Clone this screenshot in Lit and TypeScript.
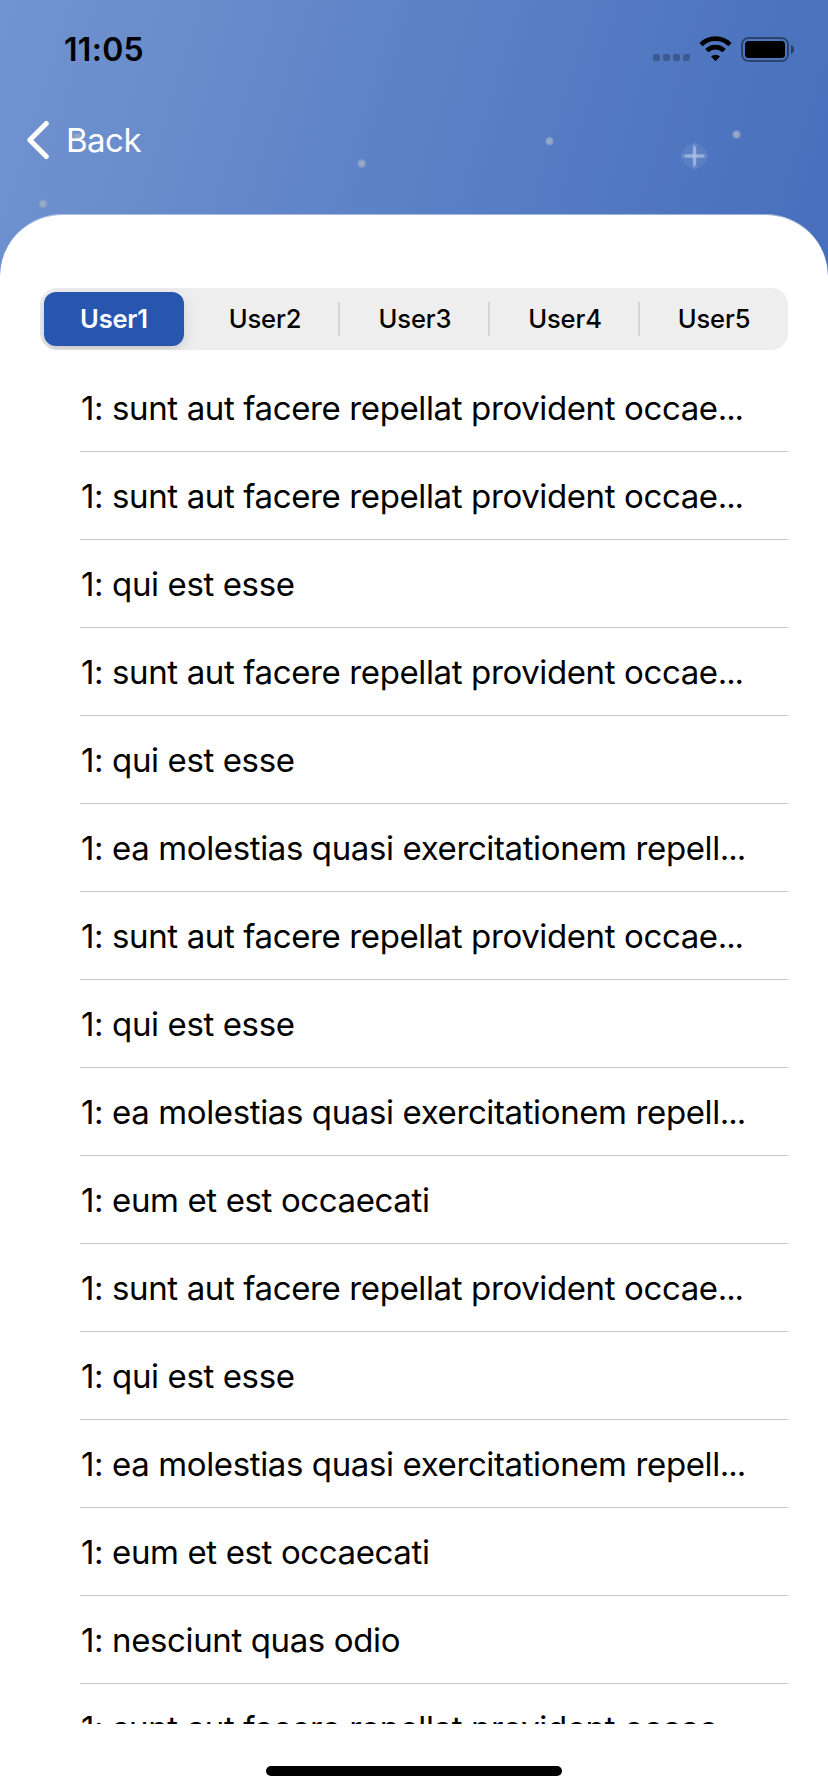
import { LitElement, html, css, svg } from "lit";
import { customElement, property, state } from "lit/decorators.js";
import { classMap } from "lit/directives/class-map.js";

const SUNT = { text: "1: sunt aut facere repellat provident occae", cut: true };
const QUI = { text: "1: qui est esse", cut: false };
const EA = { text: "1: ea molestias quasi exercitationem repell", cut: true };
const EUM = { text: "1: eum et est occaecati", cut: false };
const NESCIUNT = { text: "1: nesciunt quas odio", cut: false };

const POSTS = [SUNT, SUNT, QUI, SUNT, QUI, EA, SUNT, QUI, EA, EUM, SUNT, QUI, EA, EUM, NESCIUNT, SUNT];

const STARS = [
  [361.7, 163.5],
  [43, 203.7],
  [77.5, 137],
  [549.5, 141.2],
  [736.5, 134.5],
];

@customElement("status-bar")
export class StatusBar extends LitElement {
  static styles = css`
    :host { display: flex; justify-content: space-between; height: 94px; padding: 0 34px 0 64px; box-sizing: border-box; }
    .time { font-size: 32px; font-weight: 600; line-height: 40px; margin-top: 30px; letter-spacing: 0.3px; color: #000; }
    .icons { display: flex; align-items: flex-start; margin-top: 36px; }
  `;
  render() {
    return html`
      <span class="time">11:05</span>
      <span class="icons">
        <svg width="142" height="28" viewBox="652 36 142 28">
          <g fill="#000" fill-opacity=".25">
            ${[653, 663, 673, 683].map((x) => svg`<rect x=${x} y="54" width="7" height="7" rx="2" />`)}
          </g>
          <g fill="none" stroke="#000">
            <path d="M701 44.6 A20.5 20.5 0 0 1 730 44.6" stroke-width="4.7" />
            <path d="M706.8 50.7 A12.3 12.3 0 0 1 724.2 50.7" stroke-width="4.6" />
          </g>
          <path d="M711 56.5 A6.6 6.6 0 0 1 720 56.5 L715.5 61.2 Z" fill="#000" />
          <rect x="742" y="38" width="46" height="23" rx="6.5" fill="none" stroke="#000" stroke-opacity=".42" stroke-width="2" />
          <rect x="745" y="41" width="40" height="17" rx="3.5" fill="#000" />
          <path d="M791 45 C795 46.5 795 52.5 791 54 Z" fill="#000" fill-opacity=".45" />
        </svg>
      </span>
    `;
  }
}

@customElement("segmented-control")
export class SegmentedControl extends LitElement {
  @property({ type: Array }) items: string[] = [];
  @property({ type: Number }) selected = 0;

  static styles = css`
    :host { display: block; }
    .track { display: grid; grid-template-columns: 150px 150px 150px 150px 148px; height: 62px; border-radius: 17px; background: #eeeeee; overflow: hidden; }
    .seg { display: flex; align-items: center; justify-content: center; box-sizing: border-box; padding: 0; border: 0; background: none; font: 500 25.5px/30px Inter, sans-serif; letter-spacing: -0.1px; color: #000; }
    .seg.divided { background: linear-gradient(#d5d5d5, #d5d5d5) right 14px / 2px 34px no-repeat; }
    .seg.on { margin: 4px 6px 4px 4px; border-radius: 12px; background: #2856ae; color: #fff; font-weight: 600; letter-spacing: -0.2px; box-shadow: 0 6px 16px rgba(0, 0, 0, .12), 0 2px 3px rgba(0, 0, 0, .05); }
  `;
  render() {
    return html`<div class="track">
      ${this.items.map((label, i) => html`<button
        class=${classMap({ seg: true, on: i === this.selected, divided: i !== this.selected && i + 1 !== this.selected && i < this.items.length - 1 })}
        @click=${() => this.dispatchEvent(new CustomEvent("pick", { detail: i }))}
      >${label}</button>`)}
    </div>`;
  }
}

@customElement("app-root")
export class AppRoot extends LitElement {
  @state() private selected = 0;

  static styles = css`
    :host { display: block; font-family: Inter, sans-serif; }
    .screen { position: relative; display: flex; flex-direction: column; width: 828px; height: 1792px; overflow: hidden; background: linear-gradient(107deg, #7193d0 0, #688bca 210px, #5b81c7 440px, #5179c1 640px, #476ebb 880px); }
    .sky { position: absolute; top: 0; left: 0; }
    status-bar, .nav, .sheet { position: relative; }
    .nav { display: flex; align-items: center; height: 120px; padding-left: 25px; box-sizing: border-box; }
    .back { display: flex; align-items: center; gap: 15px; height: 44px; margin-bottom: 28px; color: #fff; font-size: 33px; line-height: 44px; letter-spacing: -0.5px; margin-top: -1px; }
    .sheet { flex: 1; min-height: 0; display: flex; flex-direction: column; box-sizing: border-box; border-top: 1px solid rgba(255, 255, 255, .45); border-radius: 62px 62px 0 0; background: #fff; background-clip: padding-box; padding: 73px 40px 0; }
    .list { height: 1374px; overflow: hidden; padding: 14px 0 0 40px; box-sizing: border-box; }
    .row { height: 88px; box-sizing: border-box; border-bottom: 1px solid #c6c6c8; font-size: 33px; line-height: 88px; text-indent: 1px; letter-spacing: -0.38px; color: #000; white-space: nowrap; }
    .dots { letter-spacing: -1.1px; }
    .home { align-self: center; width: 296px; height: 10px; margin-top: 42px; border-radius: 5px; background: #000; }
  `;

  render() {
    return html`
      <div class="screen">
        <svg class="sky" width="828" height="290" viewBox="0 0 828 290">
          <defs>
            <radialGradient id="dot">
              <stop offset="0" stop-color="#9aabc8" />
              <stop offset=".6" stop-color="#96a8c4" stop-opacity=".9" />
              <stop offset="1" stop-color="#96a8c4" stop-opacity="0" />
            </radialGradient>
            <radialGradient id="ray">
              <stop offset="0" stop-color="#a9bce2" />
              <stop offset="1" stop-color="#a9bce2" stop-opacity=".15" />
            </radialGradient>
          </defs>
          ${STARS.map(([x, y]) => svg`<circle cx=${x} cy=${y} r="4.8" fill="url(#dot)" />`)}
          <circle cx="694.5" cy="156" r="12.5" fill="#fff" fill-opacity=".07" />
          <g fill="#a3b7df">
            <rect x="693" y="146" width="3" height="20" rx="1.5" fill-opacity=".75" />
            <rect x="684.5" y="154.5" width="20" height="3" rx="1.5" fill-opacity=".75" />
          </g>
          <g fill="url(#ray)">
            <rect x="692" y="142" width="5" height="28" rx="2.5" fill-opacity=".7" />
            <rect x="680.5" y="153.5" width="28" height="5" rx="2.5" fill-opacity=".7" />
          </g>
        </svg>
        <status-bar></status-bar>
        <div class="nav">
          <div class="back">
            <svg width="26" height="40" viewBox="0 0 26 40" fill="none" stroke="#fff" stroke-width="5" stroke-linecap="round" stroke-linejoin="round">
              <path d="M21.3 3.5 L4.8 20 L21.3 36.5" />
            </svg>
            <span>Back</span>
          </div>
        </div>
        <div class="sheet">
          <segmented-control
            .items=${["User1", "User2", "User3", "User4", "User5"]}
            .selected=${this.selected}
            @pick=${(e: CustomEvent) => (this.selected = e.detail)}
          ></segmented-control>
          <div class="list">
            ${POSTS.map((p) => html`<div class="row">${p.text}${p.cut ? html`<span class="dots">...</span>` : ""}</div>`)}
          </div>
          <div class="home"></div>
        </div>
      </div>
    `;
  }
}
